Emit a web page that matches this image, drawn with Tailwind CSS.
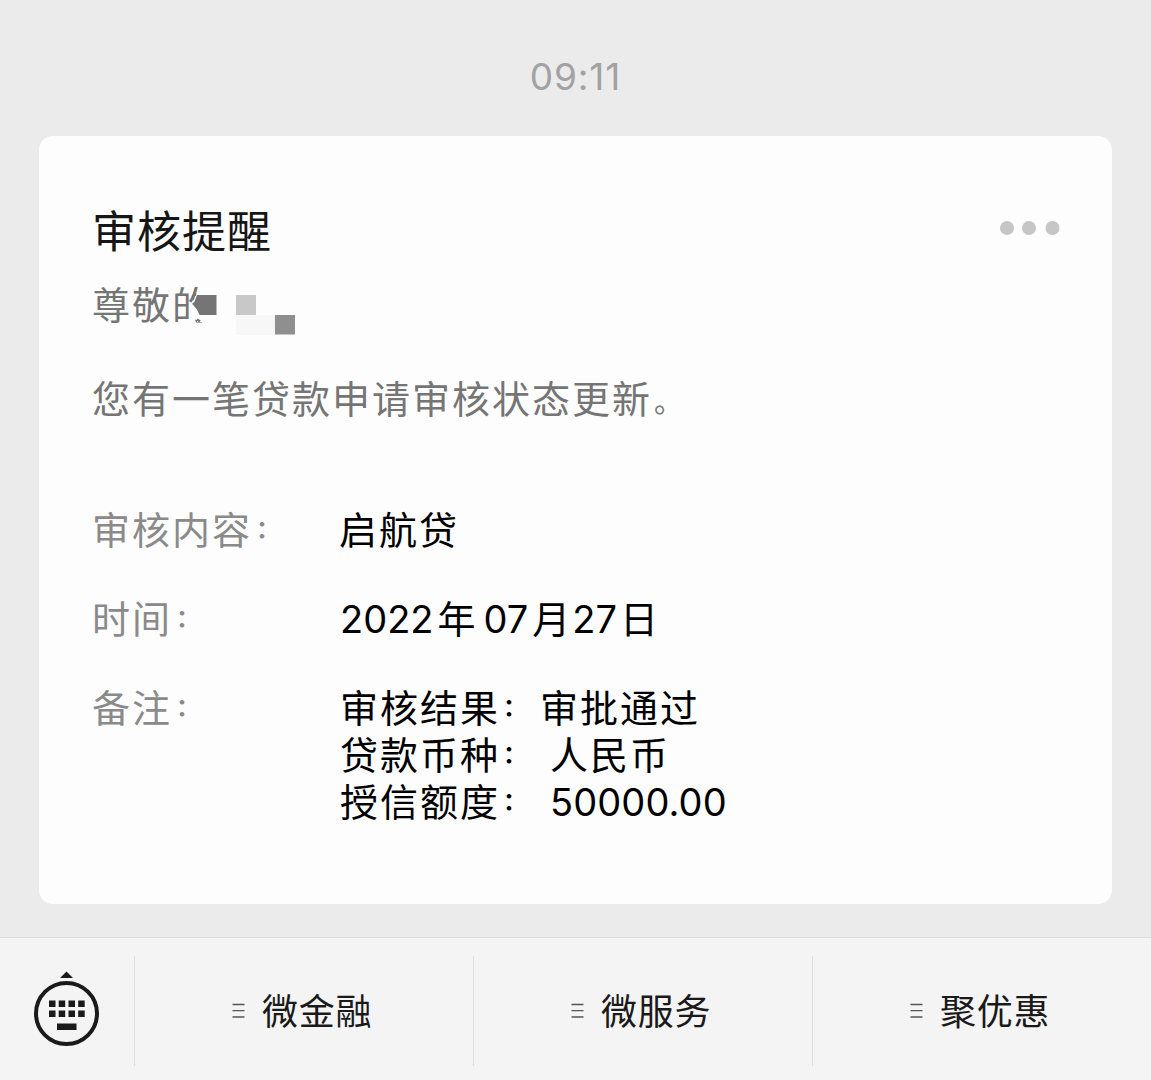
<!DOCTYPE html>
<html lang="zh-CN">
<head>
<meta charset="utf-8">
<title>审核提醒</title>
<script src="https://cdn.jsdelivr.net/npm/@tailwindcss/browser@4"></script>
</head>
<body class="w-[1151px] h-[1080px] overflow-hidden flex flex-col bg-[#ebebeb] font-['Inter','Noto_Sans_CJK_SC',sans-serif]">
<main class="h-[937px] shrink-0 flex flex-col items-center pt-[53px]">
  <time class="h-12 leading-[48px] text-[37px] tracking-[0.9px] text-[#a2a2a2]">09:11</time>
  <article class="mt-[35px] w-[1073px] h-[768px] rounded-[14px] bg-[#fdfdfd] pl-[53px] pr-[52px] pt-[65px] text-[38px] tracking-[2px] leading-[47px]">
    <header class="flex items-center justify-between h-[60px]">
      <h1 class="text-[44px] tracking-[1px] leading-[60px] text-[#161616] pt-[2px]">审核提醒</h1>
      <svg class="w-[60px] h-4 -mt-[6px]" viewBox="0 0 60 16" fill="#c6c6c6"><circle cx="7" cy="8" r="7"/><circle cx="29" cy="8" r="7"/><circle cx="52.500" cy="8" r="7"/></svg>
    </header>
    <p class="relative mt-[21px] text-[#757575]">尊敬的
      <svg class="absolute left-[100px] top-0 w-[110px] h-[56px]" viewBox="192 282 110 56">
        <path d="M200 282h102v56H202v-16h-5v-3h-1v-12l-2-1 2-11z" fill="#fdfdfd"/>
        <path d="M236 315h39v20h-39z" fill="#f7f7f7"/>
        <path d="M196.500 287l-4 13M193 303l6 7M197 319.500l3 2" fill="none" stroke="#757575" stroke-width="2.500"/>
        <path d="M197 295h19.500v20H199.500L194 303z" fill="#757575"/>
        <path d="M236 295h20v20h-20z" fill="#c8c8c8"/>
        <path d="M275 315h20v19.500h-20z" fill="#8f8f8f"/>
      </svg>
    </p>
    <p class="mt-[47px] text-[#757575]">您有一笔贷款申请审核状态更新<span class="inline-block pl-[2px] text-[29px] leading-none">。</span></p>
    <dl class="mt-[84px] grid grid-cols-[248px_1fr] gap-y-[42px] text-black">
      <dt class="text-[#8a8a8a]">审核内容<span class="relative -top-[6px] inline-block w-10 pl-1 text-[24px] leading-none font-bold tracking-normal">：</span></dt><dd class="-ml-px">启航贷</dd>
      <dt class="text-[#8a8a8a]">时间<span class="relative -top-[6px] inline-block w-10 pl-1 text-[24px] leading-none font-bold tracking-normal">：</span></dt><dd class="flex"><span class="tracking-normal mr-[4px]">2022</span><span class="mr-[6px]">年</span><span class="tracking-normal mr-[4px]">07</span>月<span class="tracking-normal mr-[3px]">27</span>日</dd>
      <dt class="text-[#8a8a8a]">备注<span class="relative -top-[6px] inline-block w-10 pl-1 text-[24px] leading-none font-bold tracking-normal">：</span></dt>
      <dd>
        <div>审核结果<span class="relative -top-[6px] inline-block w-10 pl-[3px] text-[24px] leading-none font-bold tracking-normal">：</span>审批通过</div>
        <div class="flex"><span>贷款币种<span class="relative -top-[6px] inline-block w-10 pl-[3px] text-[24px] leading-none font-bold tracking-normal">：</span></span><span class="ml-[10px]">人民币</span></div>
        <div class="flex"><span>授信额度<span class="relative -top-[6px] inline-block w-10 pl-[3px] text-[24px] leading-none font-bold tracking-normal">：</span></span><span class="ml-[10px] tracking-[0.1px]">50000.00</span></div>
      </dd>
    </dl>
  </article>
</main>
<footer class="h-[143px] shrink-0 flex border-t border-[#dcdcdc] bg-[#f4f4f4] text-[36px] tracking-[0.7px] text-[#1a1a1a] leading-[48px]">
  <div class="w-[134px] pl-[33px] pt-[33px]">
    <svg class="w-[67px] h-[78px]" viewBox="33 971 67 78" fill="#1a1a1a">
      <path d="M66.500 971.500l6.500 6.500H60z"/>
      <circle cx="66.500" cy="1013.500" r="30.500" fill="none" stroke="#1a1a1a" stroke-width="4"/>
      <path d="M49 1000.500h6.500v6.500H49zM58.700 1000.500h6.500v6.500h-6.500zM68.500 1000.500h6.500v6.500h-6.500zM78.200 1000.500h6.500v6.500h-6.500zM49 1010.500h6.500v6.500H49zM58.700 1010.500h6.500v6.500h-6.500zM68.500 1010.500h6.500v6.500h-6.500zM78.200 1010.500h6.500v6.500h-6.500zM57 1023.500h19.500v6.500H57z"/>
    </svg>
  </div>
  <div class="w-px h-[110px] mt-[18px] bg-[#dedede]"></div>
  <div class="w-[338px] flex items-center pl-[97px] h-[148px]"><svg class="w-[13px] h-[15px] mr-[17px] -mt-[3px]" viewBox="0 0 13 15" stroke="#555" stroke-width="1.300"><path d="M.5 1.500h12M.5 7.700h12M.5 14h12"/></svg><span>微金融</span></div>
  <div class="w-px h-[110px] mt-[18px] bg-[#dedede]"></div>
  <div class="w-[338px] flex items-center pl-[97px] h-[148px]"><svg class="w-[13px] h-[15px] mr-[17px] -mt-[3px]" viewBox="0 0 13 15" stroke="#555" stroke-width="1.300"><path d="M.5 1.500h12M.5 7.700h12M.5 14h12"/></svg><span>微服务</span></div>
  <div class="w-px h-[110px] mt-[18px] bg-[#dedede]"></div>
  <div class="w-[338px] flex items-center pl-[97px] h-[148px]"><svg class="w-[13px] h-[15px] mr-[17px] -mt-[3px]" viewBox="0 0 13 15" stroke="#555" stroke-width="1.300"><path d="M.5 1.500h12M.5 7.700h12M.5 14h12"/></svg><span>聚优惠</span></div>
</footer>
</body>
</html>
